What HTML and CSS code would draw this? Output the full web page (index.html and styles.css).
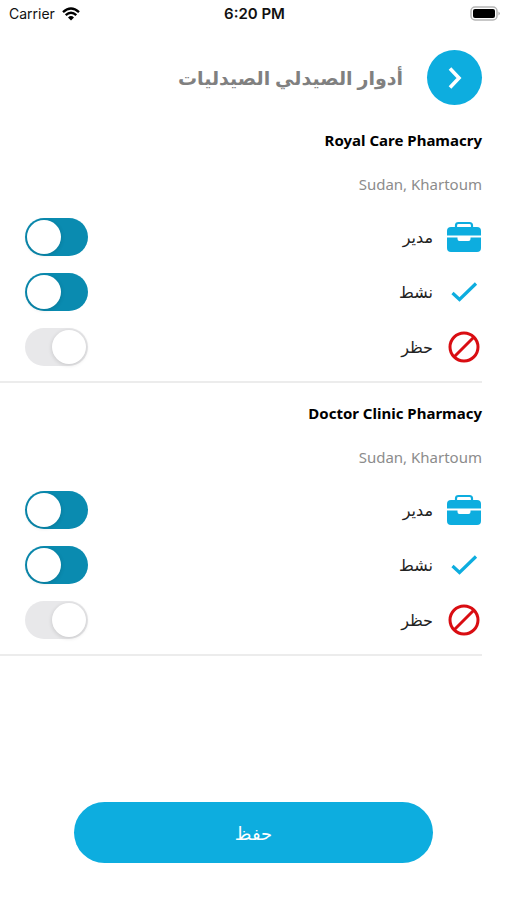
FILE: index.html
```html
<!DOCTYPE html>
<html lang="ar" dir="rtl">
<head>
<meta charset="utf-8">
<meta name="viewport" content="width=device-width, initial-scale=1">
<title>أدوار الصيدلي الصيدليات</title>
<link rel="stylesheet" href="styles.css">
</head>
<body>
<svg class="sprite" aria-hidden="true">
  <symbol id="briefcase" viewBox="0 0 36 32">
    <path d="M10 7V4.500Q10 2 12.500 2H23.500Q26 2 26 4.500V7" fill="none" stroke="currentColor" stroke-width="2.200"/>
    <path d="M5 6H31Q35 6 35 10V14.500H1V10Q1 6 5 6Z" fill="currentColor"/>
    <path d="M1 16.500H11.500V18Q11.500 20 13.500 20H22.500Q24.500 20 24.500 18V16.500H35V27Q35 31 31 31H5Q1 31 1 27Z" fill="currentColor"/>
  </symbol>
  <symbol id="check" viewBox="0 0 36 32">
    <path d="M6.500 17L13.500 23.500L30 7.500" fill="none" stroke="currentColor" stroke-width="3.200"/>
  </symbol>
  <symbol id="ban" viewBox="0 0 36 32">
    <circle cx="18" cy="16" r="14" fill="none" stroke="currentColor" stroke-width="3"/>
    <path d="M8 26L28 6" fill="none" stroke="currentColor" stroke-width="3"/>
  </symbol>
</svg>

<div class="status" dir="ltr">
  <div class="carrier">
    <span>Carrier</span>
    <svg class="wifi" viewBox="0 0 18 14" aria-hidden="true">
      <path d="M1 5.200Q9 -2 17 5.200M3.700 8.200Q9 3.400 14.300 8.200" fill="none" stroke="#000" stroke-width="2.400"/>
      <path d="M6 10.400Q9 7.800 12 10.400L9 13.500Z"/>
    </svg>
  </div>
  <time class="clock">6:20 PM</time>
  <svg class="battery" viewBox="0 0 30 16" aria-hidden="true">
    <rect x="1" y="1" width="26" height="13" rx="4" fill="#fff" stroke="#b5b5b5" stroke-width="1.500"/>
    <rect x="3" y="3" width="22" height="9" rx="2"/>
    <path d="M28.500 5.500Q31 7.500 28.500 9.500Z" fill="#a5a5a5"/>
  </svg>
</div>

<header class="header">
  <button class="back" type="button" aria-label="رجوع">
    <svg viewBox="0 0 24 24" aria-hidden="true"><path d="M7 2.500L16 12L7 21.500" fill="none" stroke="currentColor" stroke-width="3.600"/></svg>
  </button>
  <h1 class="title">أدوار الصيدلي الصيدليات</h1>
</header>

<main class="list">
  <section class="pharmacy">
    <h2 class="name"><bdi>Royal Care Phamacry</bdi></h2>
    <p class="place"><bdi>Sudan, Khartoum</bdi></p>
    <label class="role"><svg class="icon" aria-hidden="true"><use href="#briefcase"/></svg><span>مدير</span><input class="switch" type="checkbox" role="switch" checked></label>
    <label class="role"><svg class="icon" aria-hidden="true"><use href="#check"/></svg><span>نشط</span><input class="switch" type="checkbox" role="switch" checked></label>
    <label class="role"><svg class="icon danger" aria-hidden="true"><use href="#ban"/></svg><span>حظر</span><input class="switch" type="checkbox" role="switch"></label>
  </section>
  <section class="pharmacy">
    <h2 class="name"><bdi>Doctor Clinic Pharmacy</bdi></h2>
    <p class="place"><bdi>Sudan, Khartoum</bdi></p>
    <label class="role"><svg class="icon" aria-hidden="true"><use href="#briefcase"/></svg><span>مدير</span><input class="switch" type="checkbox" role="switch" checked></label>
    <label class="role"><svg class="icon" aria-hidden="true"><use href="#check"/></svg><span>نشط</span><input class="switch" type="checkbox" role="switch" checked></label>
    <label class="role"><svg class="icon danger" aria-hidden="true"><use href="#ban"/></svg><span>حظر</span><input class="switch" type="checkbox" role="switch"></label>
  </section>
</main>

<footer class="footer">
  <button class="save" type="button">حفظ</button>
</footer>
</body>
</html>
```

FILE: styles.css
```css
* {
  box-sizing: border-box;
}

body {
  display: flex;
  flex-direction: column;
  min-height: 100vh;
  margin: 0;
  background: #fff;
  color: #222;
  font-family: "Noto Sans", "DejaVu Sans", sans-serif;
}

.sprite {
  position: absolute;
  width: 0;
  height: 0;
}

.status {
  display: grid;
  grid-template-columns: 1fr auto 1fr;
  align-items: center;
  height: 28px;
  padding: 0 7px 0 9px;
  color: #111;
  font: 14px/20px Inter, sans-serif;
}

.carrier {
  display: flex;
  align-items: center;
  gap: 7px;
}

.wifi {
  width: 18px;
  height: 14px;
}

.clock {
  font-size: 15px;
  font-weight: 600;
}

.battery {
  justify-self: end;
  width: 30px;
  height: 16px;
}

.header {
  display: flex;
  align-items: center;
  gap: 24px;
  padding: 22px 25px 5px;
}

.back {
  display: grid;
  place-items: center;
  width: 55px;
  height: 55px;
  padding: 0;
  border: 0;
  border-radius: 50%;
  background: #0daddf;
  color: #fff;
}

.back svg {
  width: 24px;
  height: 24px;
}

.title {
  margin: 0;
  color: #808080;
  font-size: 19px;
  line-height: 32px;
}

.list {
  margin-right: 25px;
}

.pharmacy {
  padding: 16px 0 7px 25px;
  border-bottom: 2px solid #ececec;
}

.name,
.place {
  margin: 0;
  font-size: 15px;
  line-height: 28px;
}

.name {
  margin-bottom: 16px;
  color: #000;
}

.place {
  margin-bottom: 11px;
  color: #8c8c8c;
}

.role {
  display: flex;
  align-items: center;
  gap: 13px;
  height: 55px;
  font-size: 16px;
}

.icon {
  width: 36px;
  height: 32px;
  color: #0daddf;
}

.danger {
  color: #d90d12;
}

.switch {
  appearance: none;
  display: flex;
  align-items: center;
  width: 63px;
  height: 38px;
  margin: 0;
  margin-right: auto;
  padding: 0 2px;
  border-radius: 19px;
  background: #e8e8ea;
}

.switch::before {
  content: "";
  width: 34px;
  height: 34px;
  border-radius: 50%;
  background: #fff;
  box-shadow: 0 1px 4px rgb(0 0 0 / 15%);
}

.switch:checked {
  justify-content: flex-end;
  background: #0a8bb0;
}

.footer {
  margin-top: auto;
  padding: 37px 74px;
}

.save {
  width: 100%;
  height: 61px;
  border: 0;
  border-radius: 31px;
  background: #0daddf;
  color: #fff;
  font-family: "Noto Sans", "DejaVu Sans", sans-serif;
  font-size: 18px;
}
```
